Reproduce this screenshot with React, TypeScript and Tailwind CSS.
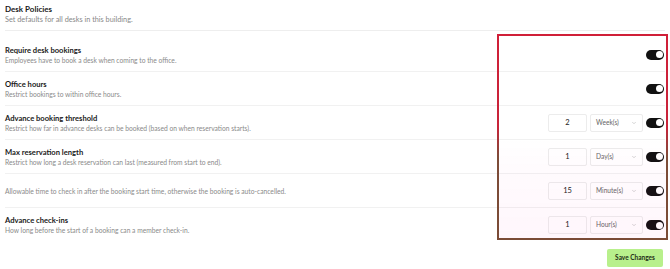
import { ChevronDown } from 'lucide-react';

type Row = {
  title?: string;
  desc: string;
  value?: string;
  unit?: string;
};

const rows: Row[] = [
  { title: 'Require desk bookings', desc: 'Employees have to book a desk when coming to the office.' },
  { title: 'Office hours', desc: 'Restrict bookings to within office hours.' },
  { title: 'Advance booking threshold', desc: 'Restrict how far in advance desks can be booked (based on when reservation starts).', value: '2', unit: 'Week(s)' },
  { title: 'Max reservation length', desc: 'Restrict how long a desk reservation can last (measured from start to end).', value: '1', unit: 'Day(s)' },
  { desc: 'Allowable time to check in after the booking start time, otherwise the booking is auto-cancelled.', value: '15', unit: 'Minute(s)' },
  { title: 'Advance check-ins', desc: 'How long before the start of a booking can a member check-in.', value: '1', unit: 'Hour(s)' },
];

function Toggle() {
  return (
    <div className="w-[18px] h-[10px] rounded-full bg-[#111] flex items-center justify-end pr-[1.5px]">
      <div className="w-[7px] h-[7px] rounded-full bg-white" />
    </div>
  );
}

export default function App() {
  return (
    <div className="relative w-[670px] h-[269px] bg-white overflow-hidden px-[5px]" style={{ fontFamily: 'Lato, "Noto Sans", sans-serif' }}>
      {/* header */}
      <div className="h-[31px] border-b border-[#eeeeee] pt-[4px]">
        <div className="text-[8px] font-bold leading-[10px] text-[#1a1a1a]">Desk Policies</div>
        <div className="text-[7.3px] leading-[11px] text-[#888]">Set defaults for all desks in this building.</div>
      </div>

      <div className="mt-[7px]">
        {rows.map((row, i) => (
          <div
            key={i}
            className={`h-[34px] flex items-center justify-between ${i < rows.length - 1 ? 'border-b border-[#f1f1f1]' : ''}`}
          >
            <div>
              {row.title && <div className="text-[7.6px] font-bold leading-[10px] text-[#1a1a1a]">{row.title}</div>}
              <div className="text-[6.7px] leading-[10px] text-[#8a8a8a]">{row.desc}</div>
            </div>
            <div className="flex items-center mr-[1px]">
              {row.value && (
                <>
                  <div className="w-[39px] h-[18px] border border-[#ececec] rounded-[2px] flex items-center justify-center text-[7.5px] text-[#222]">
                    {row.value}
                  </div>
                  <div className="ml-[3px] w-[53px] h-[18px] border border-[#ececec] rounded-[2px] flex items-center justify-between pl-[5px] pr-[5px] text-[6.6px] text-[#666]">
                    <span>{row.unit}</span>
                    <ChevronDown size={6} className="text-[#aaa]" />
                  </div>
                </>
              )}
              <div className="ml-[3px]">
                <Toggle />
              </div>
            </div>
          </div>
        ))}
      </div>

      <div className="flex justify-end mt-[7px] pr-[2px]">
        <button className="w-[56px] h-[18px] rounded-[2px] bg-[#b8f08c] text-[6.5px] font-bold text-[#1f2d16]">Save Changes</button>
      </div>

      {/* annotation frame */}
      <div className="absolute left-[497px] top-[34px] w-[171px] h-[206px] border-2 border-solid [border-image:linear-gradient(to_bottom,#d01f38_0%,#c8243a_45%,#7d4c38_60%,#7a4b36_100%)_1] bg-[linear-gradient(to_bottom,transparent_0%,transparent_50%,rgba(255,0,160,0.015)_65%,rgba(255,0,160,0.035)_100%)]" />
    </div>
  );
}
